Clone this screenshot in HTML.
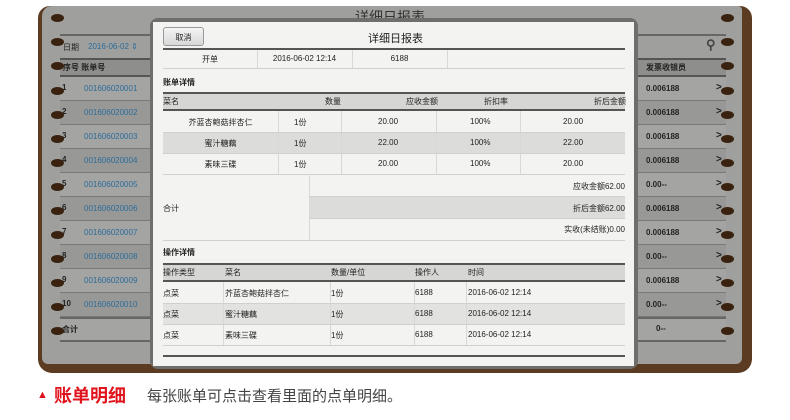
<!DOCTYPE html>
<html><head><meta charset="utf-8"><style>
*{margin:0;padding:0;box-sizing:border-box}
body{width:790px;height:420px;background:#fff;position:relative;overflow:hidden;font-family:"Liberation Sans","Noto Sans CJK SC",sans-serif;font-size:8px;color:#222}
.a{position:absolute}
.wood{left:38px;top:6px;width:714px;height:367px;background:#5b3b22;border-radius:12px 12px 14px 14px}
.paper{left:42px;top:6px;width:700px;height:358px;background:#9f9f9d;border-radius:10px 4px 6px 6px}
.hole{position:absolute;width:13px;height:8px;border-radius:50%;background:#3a2210}
.ln{position:absolute;height:1px;background:#7c7c7a}
.modal{left:150px;top:18px;width:488px;height:351px;background:#6e6e6c;border-radius:8px}
.in{left:153px;top:22px;width:481px;height:344px;background:#f3f3f1}
.c{position:absolute;text-align:center}
.g{background:#dcdcda}
.blue{color:#2c6d9c}
.t{position:absolute;white-space:nowrap}
.vl{position:absolute;width:1px;background:#d8d8d6}
.hl{position:absolute;height:1px;background:#d0d0ce}
.th{position:absolute;height:2px;background:#555}
</style></head><body>
<div class="a wood"></div>
<div class="a paper"></div>
<div class="t" style="left:355px;top:7px;font-size:14px;color:#333">详细日报表</div>
<div class="ln" style="left:60px;top:34px;width:90px;height:2px;background:#666"></div>
<div class="t" style="left:63px;top:42px">日期</div>
<div class="t blue" style="left:88px;top:42px">2016-06-02 ⇕</div>
<div class="a" style="left:60px;top:58px;width:90px;height:19px;background:#8e8e8c;border-top:2px solid #555;border-bottom:2px solid #555"></div>
<div class="t" style="left:63px;top:62px;font-weight:bold">序号 账单号</div>
<div class="ln" style="left:638px;top:34px;width:88px;height:2px;background:#666"></div>
<div class="a" style="left:638px;top:58px;width:88px;height:19px;background:#8e8e8c;border-top:2px solid #555;border-bottom:2px solid #555"></div>
<div class="t" style="left:646px;top:62px;font-weight:bold">发票收银员</div>
<div class="t" style="left:706px;top:37px;font-size:13px;font-weight:bold;color:#444">⚲</div>
<div id="rows"></div>
<script>
var h='';for(var i=0;i<14;i++){var y=14+i*24+(i>2?1:0);h+='<div class="hole" style="left:51px;top:'+y+'px"></div><div class="hole" style="left:721px;top:'+y+'px"></div>';}
var r='';var vals=['0.006188','0.006188','0.006188','0.006188','0.00--','0.006188','0.006188','0.00--','0.006188','0.00--'];
for(var i=0;i<10;i++){var y=77+i*24;var bg=i%2?'#989896':'#a4a4a2';
r+='<div class="a" style="left:60px;top:'+y+'px;width:90px;height:24px;background:'+bg+';border-bottom:1px solid #7a7a78"></div>';
r+='<div class="a" style="left:638px;top:'+y+'px;width:88px;height:24px;background:'+bg+';border-bottom:1px solid #7a7a78"></div>';
r+='<div class="t" style="left:62px;top:'+(y+6)+'px;font-weight:bold">'+(i+1)+'</div>';
r+='<div class="t blue" style="left:84px;top:'+(y+7)+'px">0016060200'+(i<9?'0':'')+(i+1)+'</div>';
r+='<div class="t" style="left:646px;top:'+(y+7)+'px;font-weight:bold">'+vals[i]+'</div>';
r+='<div class="t" style="left:716px;top:'+(y+5)+'px;font-size:10px;font-weight:bold">&gt;</div>';}
r+='<div class="a" style="left:60px;top:317px;width:90px;height:25px;background:#a4a4a2;border-top:2px solid #666;border-bottom:2px solid #666"></div>';
r+='<div class="a" style="left:638px;top:317px;width:88px;height:25px;background:#a4a4a2;border-top:2px solid #666;border-bottom:2px solid #666"></div>';
r+='<div class="t" style="left:62px;top:324px;font-weight:bold">合计</div><div class="t" style="left:656px;top:324px;font-weight:bold">0--</div>';
document.getElementById('rows').innerHTML=r+h;
</script>
<div class="a modal"></div>
<div class="a in"></div>
<div class="a" style="left:163px;top:27px;width:41px;height:19px;border:1px solid #999;border-radius:3px;background:linear-gradient(#f4f4f4,#d8d8d8)"></div>
<div class="c" style="left:163px;top:32px;width:41px">取消</div>
<div class="t" style="left:368px;top:30px;font-size:11px;color:#222">详细日报表</div>
<div class="th" style="left:163px;top:48px;width:462px"></div>
<div class="c" style="left:163px;top:54px;width:94px">开单</div>
<div class="c" style="left:257px;top:54px;width:95px">2016-06-02 12:14</div>
<div class="c" style="left:352px;top:54px;width:95px">6188</div>
<div class="vl" style="left:257px;top:50px;height:18px"></div><div class="vl" style="left:352px;top:50px;height:18px"></div><div class="vl" style="left:447px;top:50px;height:18px"></div>
<div class="hl" style="left:163px;top:68px;width:462px"></div>
<div class="t" style="left:163px;top:77px;font-weight:bold">账单详情</div>
<div class="a g" style="left:163px;top:92px;width:462px;height:19px;border-top:2px solid #555;border-bottom:2px solid #555;background:#d6d6d4"></div>
<div class="t" style="left:163px;top:96px">菜名</div>
<div class="t" style="left:325px;top:96px">数量</div>
<div class="t" style="left:406px;top:96px">应收金额</div>
<div class="t" style="left:484px;top:96px">折扣率</div>
<div class="t" style="left:594px;top:96px">折后金额</div>
<div class="a g" style="left:163px;top:132px;width:462px;height:21px"></div>
<div class="c" style="left:163px;top:117px;width:115px">芥蓝杏鲍菇拌杏仁</div>
<div class="c" style="left:163px;top:138px;width:115px">蜜汁糖藕</div>
<div class="c" style="left:163px;top:159px;width:115px">素味三碟</div>
<div class="t" style="left:294px;top:117px">1份</div><div class="t" style="left:294px;top:138px">1份</div><div class="t" style="left:294px;top:159px">1份</div>
<div class="t" style="left:378px;top:117px">20.00</div><div class="t" style="left:378px;top:138px">22.00</div><div class="t" style="left:378px;top:159px">20.00</div>
<div class="t" style="left:470px;top:117px">100%</div><div class="t" style="left:470px;top:138px">100%</div><div class="t" style="left:470px;top:159px">100%</div>
<div class="t" style="left:563px;top:117px">20.00</div><div class="t" style="left:563px;top:138px">22.00</div><div class="t" style="left:563px;top:159px">20.00</div>
<div class="vl" style="left:278px;top:111px;height:63px"></div><div class="vl" style="left:341px;top:111px;height:63px"></div><div class="vl" style="left:436px;top:111px;height:63px"></div><div class="vl" style="left:520px;top:111px;height:63px"></div>
<div class="hl" style="left:163px;top:132px;width:462px"></div><div class="hl" style="left:163px;top:153px;width:462px"></div><div class="hl" style="left:163px;top:174px;width:462px"></div>
<div class="a g" style="left:309px;top:196px;width:316px;height:22px"></div>
<div class="vl" style="left:309px;top:174px;height:66px"></div>
<div class="hl" style="left:309px;top:196px;width:316px"></div><div class="hl" style="left:309px;top:218px;width:316px"></div><div class="hl" style="left:163px;top:240px;width:462px"></div>
<div class="t" style="left:163px;top:203px">合计</div>
<div class="t" style="right:165px;top:181px">应收金额62.00</div>
<div class="t" style="right:165px;top:203px">折后金额62.00</div>
<div class="t" style="right:165px;top:224px">实收(未结账)0.00</div>
<div class="t" style="left:163px;top:247px;font-weight:bold">操作详情</div>
<div class="a" style="left:163px;top:263px;width:462px;height:19px;border-top:2px solid #555;border-bottom:2px solid #555;background:#d6d6d4"></div>
<div class="t" style="left:163px;top:267px">操作类型</div><div class="t" style="left:225px;top:267px">菜名</div><div class="t" style="left:331px;top:267px">数量/单位</div><div class="t" style="left:415px;top:267px">操作人</div><div class="t" style="left:468px;top:267px">时间</div>
<div class="a g" style="left:163px;top:303px;width:462px;height:21px;background:#e2e2e0"></div>
<div class="vl" style="left:223px;top:282px;height:63px"></div><div class="vl" style="left:330px;top:282px;height:63px"></div><div class="vl" style="left:414px;top:282px;height:63px"></div><div class="vl" style="left:466px;top:282px;height:63px"></div>
<div class="hl" style="left:163px;top:303px;width:462px"></div><div class="hl" style="left:163px;top:324px;width:462px"></div><div class="hl" style="left:163px;top:345px;width:462px"></div>
<div class="t" style="left:163px;top:288px">点菜</div><div class="t" style="left:163px;top:309px">点菜</div><div class="t" style="left:163px;top:330px">点菜</div>
<div class="t" style="left:225px;top:288px">芥蓝杏鲍菇拌杏仁</div><div class="t" style="left:225px;top:309px">蜜汁糖藕</div><div class="t" style="left:225px;top:330px">素味三碟</div>
<div class="t" style="left:331px;top:288px">1份</div><div class="t" style="left:331px;top:309px">1份</div><div class="t" style="left:331px;top:330px">1份</div>
<div class="t" style="left:415px;top:288px">6188</div><div class="t" style="left:415px;top:309px">6188</div><div class="t" style="left:415px;top:330px">6188</div>
<div class="t" style="left:468px;top:288px">2016-06-02 12:14</div><div class="t" style="left:468px;top:309px">2016-06-02 12:14</div><div class="t" style="left:468px;top:330px">2016-06-02 12:14</div>
<div class="th" style="left:163px;top:355px;width:462px"></div>
<div class="t" style="left:37px;top:389px;font-size:11px;color:#e0141c">▲</div>
<div class="t" style="left:54px;top:382px;font-size:18px;font-weight:bold;color:#e0141c">账单明细</div>
<div class="t" style="left:147px;top:385px;font-size:15px;color:#444">每张账单可点击查看里面的点单明细。</div>
</body></html>
